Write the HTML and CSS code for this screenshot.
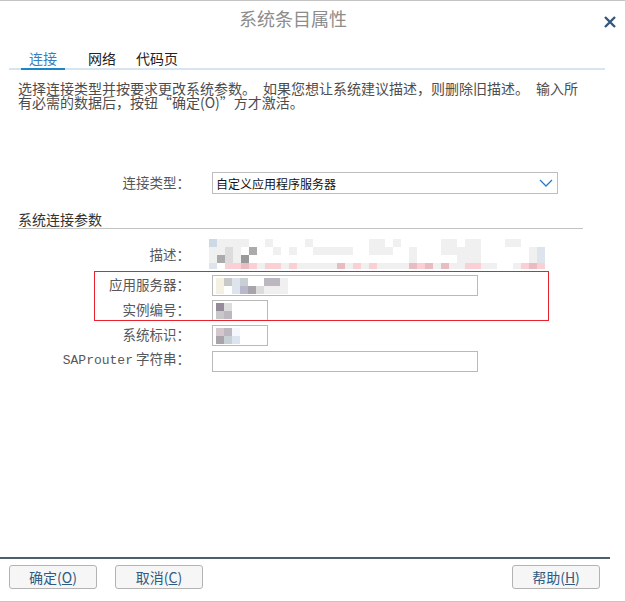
FILE: index.html
```html
<!DOCTYPE html>
<html lang="zh-CN">
<head>
  <meta charset="UTF-8" />
  <meta name="viewport" content="width=device-width, initial-scale=1.0"/>
  <title>系统条目属性</title>
  <link rel="stylesheet" href="styles.css">
</head>
<body>

<div class="dialog">
  <header class="titlebar">
    <h1 class="title">系统条目属性</h1>
    <div class="close">
      <svg width="12" height="12" viewBox="0 0 12 12"><path d="M1 1 L11 11 M11 1 L1 11" /></svg>
    </div>
  </header>

  <nav class="tabs">
    <span class="tab active">连接</span>
    <span class="tab">网络</span>
    <span class="tab">代码页</span>
  </nav>

  <p class="intro">选择连接类型并按要求更改系统参数。　如果您想让系统建议描述，则删除旧描述。　输入所有必需的数据后，按钮“确定(O)”方才激活。</p>

  <div class="type-row">
    <label>连接类型：</label>
    <div class="select">
      <span>自定义应用程序服务器</span>
      <svg width="14" height="8" viewBox="0 0 14 8"><polyline points="1,1 7,7 13,1" /></svg>
    </div>
  </div>

  <h2 class="section">系统连接参数</h2>

  <div class="params">
    <label>描述：</label>
    <div class="mosaic desc" data-rows="bgggg..g....g.......gg.g.....gg.gg...gg...|ggmg.d..g.g..ggggg..ggg..g...ggggg......gl|gdmgD....................g.....ggg......gl|l.ppPpgppgpgggggPgpgpggggPpPgPggppgg..gpPp"></div>

    <label>应用服务器：</label>
    <div class="field wide"><div class="mosaic" data-rows="ynls..kkg|y.lvqmggg"></div></div>

    <label>实例编号：</label>
    <div class="field narrow"><div class="mosaic" data-rows="um|nk"></div></div>

    <label>系统标识：</label>
    <div class="field narrow"><div class="mosaic" data-rows="rkw|qst"></div></div>

    <label><span class="mono">SAProuter</span> 字符串：</label>
    <div class="field wide"></div>

    <div class="highlight"></div>
  </div>

  <footer class="buttons">
    <button class="btn">确定(<u>O</u>)</button>
    <button class="btn">取消(<u>C</u>)</button>
    <button class="btn help">帮助(<u>H</u>)</button>
  </footer>
</div>

<script>
  // blurred values, drawn as blocks
  document.querySelectorAll('.mosaic').forEach(el => {
    el.dataset.rows.split('|').forEach(row => {
      const line = document.createElement('div');
      line.className = 'mosaic-row';
      [...row].forEach(ch => {
        const cell = document.createElement('span');
        cell.className = ch === '.' ? 'cell' : 'cell c-' + ch;
        line.appendChild(cell);
      });
      el.appendChild(line);
    });
  });
</script>

</body>
</html>
```

FILE: styles.css
```css
* { box-sizing: border-box; }

body {
  margin: 0;
  font-family: "Noto Sans CJK SC", "Liberation Sans", sans-serif;
  background: #fff;
  color: #555;
}

.dialog {
  width: 625px;
  height: 602px;
  border-top: 1px solid #c4c4c4;
  border-bottom: 1px solid #c4c4c4;
  display: flex;
  flex-direction: column;
}

.titlebar {
  display: flex;
  height: 47px;
}

.title {
  flex: 1;
  margin: 0;
  padding-top: 5px;
  text-align: center;
  font-size: 18px;
  font-weight: normal;
  line-height: 24px;
  color: #8c8c8c;
}

.close {
  width: 39px;
  padding: 15px 0 0 18px;
}

.close svg {
  display: block;
  stroke: #34577e;
  stroke-width: 2.4;
}

.tabs {
  display: flex;
  gap: 4px;
  margin: 0 20px 0 9px;
  padding-left: 12px;
  border-bottom: 2px solid #d8e4ef;
}

.tab {
  padding: 0 8px;
  font-size: 14px;
  line-height: 20px;
  color: #222;
  margin-bottom: -2px;
  border-bottom: 2px solid transparent;
}

.tab.active {
  color: #3a7fc0;
  border-bottom-color: #1b87c9;
  margin-right: 11px;
}

.intro {
  margin: 11px 0 0 18px;
  width: 566px;
  font-size: 14px;
  line-height: 14px;
  color: #4d4d4d;
}

.type-row,
.params {
  display: grid;
  grid-template-columns: 172px auto;
  column-gap: 22px;
  align-items: center;
  justify-items: start;
  margin-left: 18px;
}

.type-row { margin-top: 63px; }

label {
  justify-self: end;
  padding-bottom: 3px;
  font-size: 13.5px;
  line-height: 16px;
  color: #585858;
}

.mono {
  font-family: "Liberation Mono", monospace;
  font-size: 13px;
}

.select {
  width: 346px;
  height: 22px;
  border: 1px solid #bdbdbd;
  display: flex;
  align-items: center;
  justify-content: space-between;
  padding: 0 4px 0 3px;
  font-size: 12px;
  color: #111;
}

.select svg {
  fill: none;
  stroke: #2a7bc7;
  stroke-width: 1.3;
}

.section {
  margin: 17px 0 0 18px;
  width: 565px;
  font-size: 14px;
  font-weight: normal;
  line-height: 17px;
  color: #333;
  border-bottom: 1px solid #c2c2c2;
}

.params {
  position: relative;
  row-gap: 4px;
  margin-top: 10px;
}

.field {
  height: 21px;
  border: 1px solid #b9b9b9;
  padding: 2px 3px;
  overflow: hidden;
}

.field.wide { width: 266px; }
.field.narrow { width: 56px; }

.mosaic {
  display: grid;
  grid-auto-rows: 8px;
}

.mosaic.desc {
  grid-template-rows: 8px 8px 8px 6px;
  margin: 0 0 2px -3px;
}

.mosaic-row { display: flex; }

.cell {
  flex: none;
  width: 8px;
  height: 100%;
}

.c-g { background: #f0f0f0; }
.c-m { background: #dcdcdc; }
.c-n { background: #c8c8c8; }
.c-d { background: #ababab; }
.c-D { background: #9a9a9a; }
.c-b { background: #cdd9e5; }
.c-l { background: #dde4ec; }
.c-p { background: #fbd0d4; }
.c-P { background: #e8bcc0; }
.c-y { background: #f4f1e2; }
.c-k { background: #bdb8bf; }
.c-v { background: #b9b7cb; }
.c-q { background: #a8a4aa; }
.c-u { background: #958a9a; }
.c-r { background: #d4c8cc; }
.c-s { background: #c8d0d4; }
.c-t { background: #dce4f0; }
.c-w { background: #f4f8fc; }

.highlight {
  position: absolute;
  left: 76px;
  top: 32px;
  width: 455px;
  height: 50px;
  border: 1px solid #e8212b;
  pointer-events: none;
}

.buttons {
  margin-top: auto;
  width: 610px;
  display: flex;
  gap: 18px;
  border-top: 2px solid #4b5f6d;
  padding: 6px 10px 12px 9px;
}

.btn {
  width: 88px;
  height: 24px;
  padding: 0;
  border: 1px solid #b3b3b3;
  border-radius: 3px;
  background: #f6f6f6;
  color: #2e5b84;
  font-family: inherit;
  font-size: 14px;
  line-height: 22px;
}

.btn.help { margin-left: auto; }
```
